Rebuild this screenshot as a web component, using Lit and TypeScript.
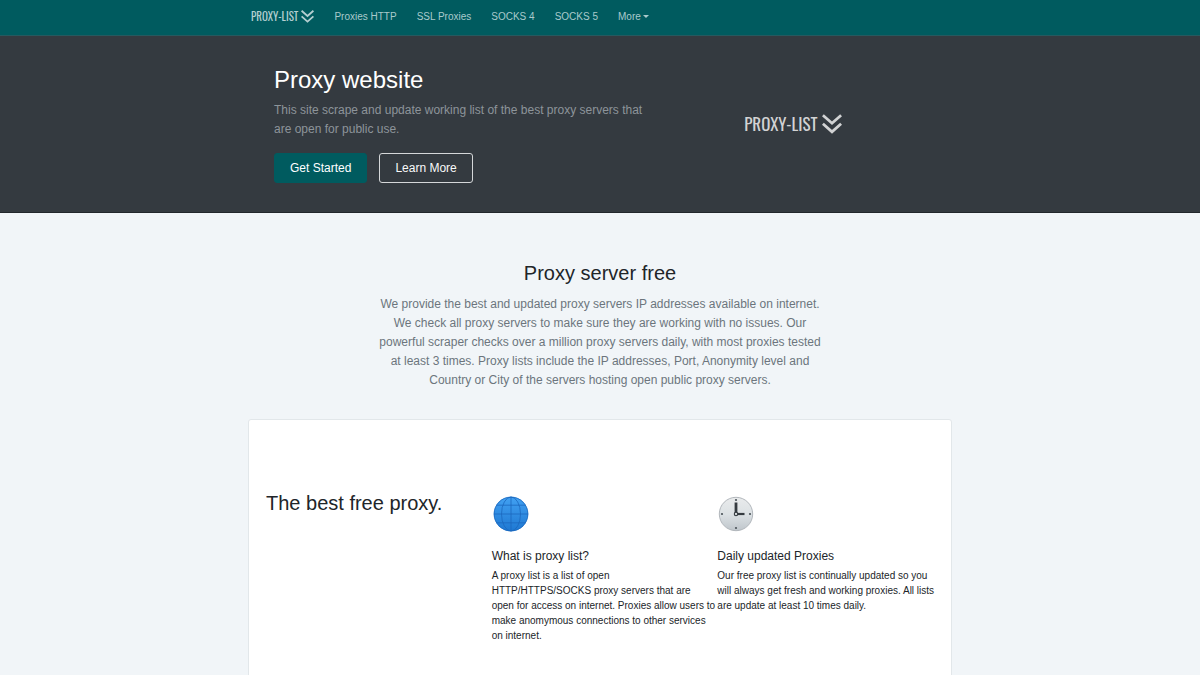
import { LitElement, html, css, svg } from "lit";
import { customElement, property } from "lit/decorators.js";

@customElement("brand-logo")
export class BrandLogo extends LitElement {
  @property({ type: Boolean, reflect: true }) large = false;

  static styles = css`
    :host {
      display: inline-flex;
      align-items: center;
      gap: 3px;
      color: #b5cfd1;
      font: 400 11px/16px "Oswald", "Liberation Sans Narrow", "Liberation Sans", sans-serif;
    }
    :host([large]) {
      gap: 5px;
      color: #d2d3d4;
      font-size: 17px;
      line-height: 24px;
    }
    .mark {
      width: 13px;
      height: 13px;
    }
    :host([large]) .mark {
      width: 20px;
      height: 20px;
    }
  `;

  render() {
    return html`<span>PROXY-LIST</span>
      <svg class="mark" viewBox="0 0 20 20" fill="none" stroke="currentColor" stroke-width="2.8" aria-hidden="true">
        <path d="M.9 1.2 10 9.2 19.1 1.2M.9 9.8 10 17.8 19.1 9.8" />
      </svg>`;
  }
}

const globe = svg`
  <defs>
    <linearGradient id="sea" x1="0" y1="0" x2="0" y2="1">
      <stop offset="0" stop-color="#42a1f2" />
      <stop offset="1" stop-color="#1e78d2" />
    </linearGradient>
  </defs>
  <circle cx="18" cy="18" r="17.2" fill="url(#sea)" />
  <g fill="none" stroke="#1c68be" stroke-width=".8">
    <circle cx="18" cy="18" r="16.9" />
    <path d="M18 1v34M1 18h34M3.5 9.2h29M3.5 26.8h29" />
    <ellipse cx="18" cy="18" rx="9.5" ry="17" />
  </g>`;

const clock = svg`
  <defs>
    <linearGradient id="face" x1="0" y1="0" x2="0" y2="1">
      <stop offset="0" stop-color="#e9ebec" />
      <stop offset=".5" stop-color="#dce1e4" />
      <stop offset="1" stop-color="#bfc6cb" />
    </linearGradient>
  </defs>
  <circle cx="18" cy="18" r="16.7" fill="url(#face)" stroke="#b2b7bc" />
  <g fill="#4b5359">
    <circle cx="18" cy="4" r="1.1" />
    <circle cx="18" cy="32" r="1.1" />
    <circle cx="4" cy="18" r="1.1" />
    <circle cx="32" cy="18" r="1.1" />
  </g>
  <path d="M18 18V6.5" fill="none" stroke="#353b40" stroke-width="2.8" />
  <path d="M18 18h8.5" fill="none" stroke="#353b40" stroke-width="2.2" />
  <circle cx="18" cy="18" r="1.7" fill="#d9dddf" stroke="#353b40" stroke-width="1.1" />`;

const links = ["Proxies HTTP", "SSL Proxies", "SOCKS 4", "SOCKS 5"];

const features = [
  {
    icon: globe,
    title: "What is proxy list?",
    text: "A proxy list is a list of open HTTP/HTTPS/SOCKS\u00a0proxy servers that are open\u00a0for access on internet. Proxies allow users to make anomymous connections to other services on\u00a0internet.",
  },
  {
    icon: clock,
    title: "Daily updated Proxies",
    text: "Our free proxy list is continually updated so you will always get fresh and working proxies. All lists are update at least 10 times daily.",
  },
];

@customElement("app-root")
export class AppRoot extends LitElement {
  static styles = css`
    :host {
      display: block;
      min-height: 100vh;
      background: #f1f5f8;
      color: #212529;
      font: 10px/15px "Liberation Sans", Arial, sans-serif;
      overflow-x: hidden;
    }
    *, *::before, *::after { box-sizing: border-box; }
    h1, h2, h3, p { margin: 0; font-weight: 400; }
    a { color: inherit; text-decoration: none; }
    .container {
      max-width: 704px;
      margin: 0 auto;
    }
    .topbar {
      background: #005b5f;
      border-bottom: 1px solid #26595f;
      color: #a9cacc;
    }
    .nav {
      display: flex;
      align-items: center;
      height: 35px;
      padding: 0 3px 3px;
    }
    .brand { display: flex; margin-right: 10px; }
    .link {
      padding: 0 10px;
      border: 0;
      background: none;
      color: inherit;
      font: inherit;
      cursor: pointer;
    }
    .more { display: flex; align-items: center; gap: 2px; }
    .caret {
      border: 3px solid transparent;
      border-top-color: currentColor;
      border-bottom: 0;
    }
    .hero {
      background: #343a40;
      color: #fff;
      border-bottom: 1px solid #22272c;
    }
    .intro {
      display: grid;
      grid-template-columns: 7fr 5fr;
      align-items: center;
      padding: 28px 22px 29px 26px;
    }
    .intro h1 { font-size: 24px; line-height: 32px; margin-bottom: 5px; }
    .lead { font-size: 12px; line-height: 19px; color: #6c757d; }
    .hero .lead { max-width: 380px; color: #8d949a; }
    .actions { display: flex; gap: 12px; margin-top: 14px; }
    .btn {
      padding: 5px 15px;
      border: 1px solid #005b5f;
      border-radius: 3px;
      background: #005b5f;
      color: #fff;
      font: 12px/18px "Liberation Sans", Arial, sans-serif;
      cursor: pointer;
    }
    .outline { background: none; border-color: #d5d7d9; color: #f8f9fa; }
    .emblem { display: flex; justify-content: center; }
    .about { padding: 48px 0 29px; text-align: center; }
    .about h2 { font-size: 20px; line-height: 24px; margin-bottom: 10px; }
    .about .lead { max-width: 448px; margin: 0 auto; }
    .card {
      display: grid;
      grid-template-columns: repeat(3, 1fr);
      padding: 71px 8px 80px 17px;
      border: 1px solid #e2e7ea;
      border-radius: 3px 3px 0 0;
      background: #fff;
    }
    .card h2 { font-size: 20px; line-height: 24px; }
    .icon { display: block; width: 36px; height: 36px; margin: 5px 1px 16px; }
    .feature h3 { font-size: 12px; line-height: 16px; margin-bottom: 4px; }
  `;

  render() {
    return html`
      <header class="topbar">
        <nav class="container nav" aria-label="Main">
          <a class="brand" href="#"><brand-logo></brand-logo></a>
          ${links.map((name) => html`<a class="link" href="#">${name}</a>`)}
          <button class="link more" type="button" aria-haspopup="true">More<span class="caret"></span></button>
        </nav>
      </header>
      <section class="hero">
        <div class="container intro">
          <div>
            <h1>Proxy website</h1>
            <p class="lead">This site scrape and update working list of the best proxy servers that are open for public use.</p>
            <div class="actions">
              <button class="btn" type="button">Get Started</button>
              <button class="btn outline" type="button">Learn More</button>
            </div>
          </div>
          <div class="emblem"><brand-logo large></brand-logo></div>
        </div>
      </section>
      <main class="container">
        <section class="about">
          <h2>Proxy server free</h2>
          <p class="lead">
            We provide the best and updated proxy servers IP addresses available on internet. We check all proxy servers
            to make sure they are working with no issues. Our powerful scraper checks over a million proxy servers daily,
            with most proxies tested at least 3 times. Proxy lists include the IP addresses, Port, Anonymity level and
            Country or City of the servers hosting open public proxy servers.
          </p>
        </section>
        <section class="card">
          <h2>The best free proxy.</h2>
          ${features.map(
            (f) => html`<article class="feature">
              <svg class="icon" viewBox="0 0 36 36" aria-hidden="true">${f.icon}</svg>
              <h3>${f.title}</h3>
              <p>${f.text}</p>
            </article>`,
          )}
        </section>
      </main>
    `;
  }
}
